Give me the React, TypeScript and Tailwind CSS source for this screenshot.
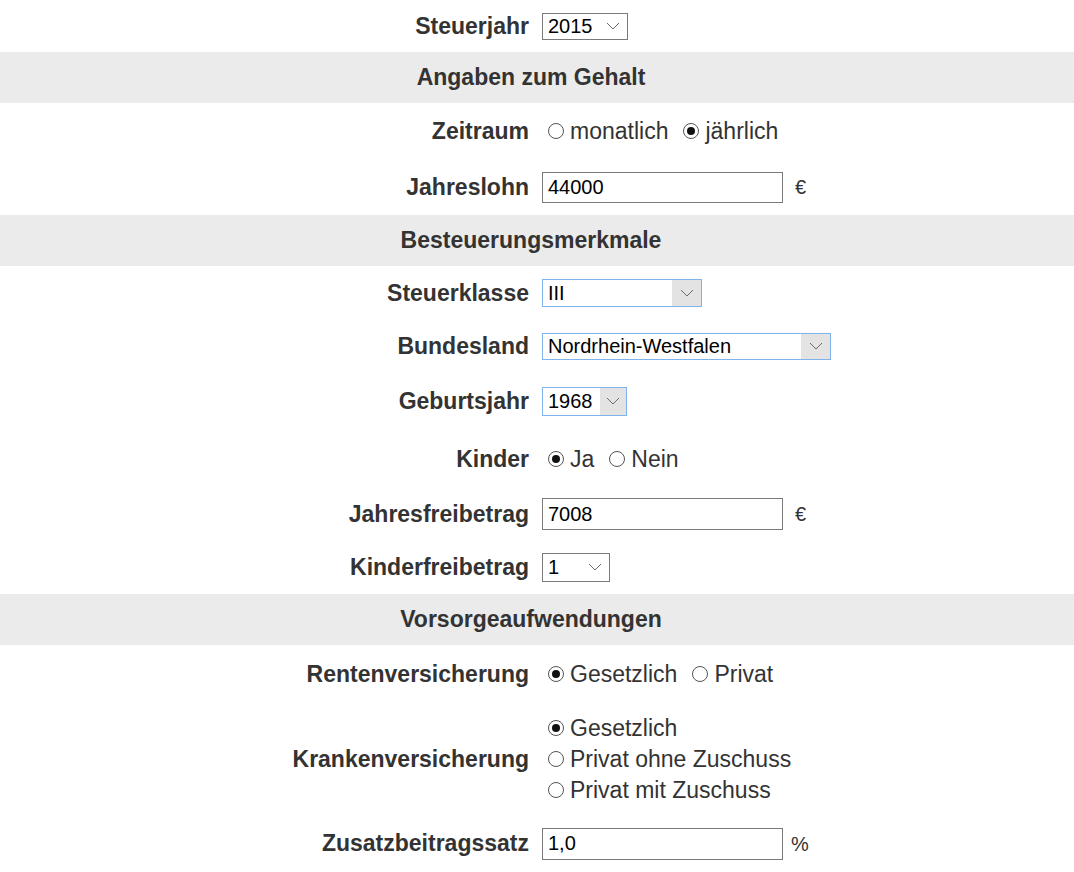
import React from 'react'

const font = { fontFamily: '"Liberation Sans", Arial, sans-serif' }

function Chevron() {
  return (
    <svg width="14" height="8" viewBox="0 0 14 8" className="shrink-0">
      <polyline points="1,1 7,7 13,1" fill="none" stroke="#6b6b6b" strokeWidth="1" />
    </svg>
  )
}

function Select({ value, box, arrow }: { value: string; box: string; arrow: string }) {
  return (
    <div className={`flex items-stretch bg-white text-[20px] text-black leading-none ${box}`}>
      <span className="flex-1 flex items-center pl-[5px]">{value}</span>
      <span className={`flex items-center justify-center ${arrow}`}>
        <Chevron />
      </span>
    </div>
  )
}

function TextInput({ value, box }: { value: string; box: string }) {
  return (
    <input
      type="text"
      defaultValue={value}
      className={`border border-[#7a7a7a] bg-white px-[5px] text-[20px] text-black outline-none ${box}`}
      style={font}
    />
  )
}

function Radio({ label, checked, first }: { label: string; checked?: boolean; first?: boolean }) {
  return (
    <span className={`inline-flex items-center ${first ? '' : 'ml-[9px]'}`}>
      <span className="mx-[6px] w-4 h-4 rounded-full border border-[#555] bg-white flex items-center justify-center">
        {checked && <span className="w-[8px] h-[8px] rounded-full bg-[#111]" />}
      </span>
      <span className="text-[23px] text-[#333]">{label}</span>
    </span>
  )
}

function Row({ label, h, children }: { label: string; h: string; children: React.ReactNode }) {
  return (
    <div className={`flex items-center ${h}`}>
      <div className="w-[529px] shrink-0 text-right text-[23px] font-bold text-[#333]">{label}</div>
      <div className="ml-[13px] flex items-center">{children}</div>
    </div>
  )
}

function Band({ title }: { title: string }) {
  return (
    <div className="h-[51px] bg-[#ebebeb] flex items-center justify-center pr-[12px] text-[23px] font-bold text-[#333]">
      {title}
    </div>
  )
}

export default function App() {
  return (
    <div className="w-[1074px] h-[872px] bg-white overflow-hidden" style={font}>
      {/* Steuerjahr */}
      <Row label="Steuerjahr" h="h-[52px]">
        <Select value="2015" box="w-[86px] h-[27px] border border-[#7a7a7a]" arrow="w-[28px]" />
      </Row>

      <Band title="Angaben zum Gehalt" />

      <Row label="Zeitraum" h="h-[56px]">
        <Radio label="monatlich" first />
        <Radio label="jährlich" checked />
      </Row>
      <Row label="Jahreslohn" h="h-[56px]">
        <TextInput value="44000" box="w-[241px] h-[31px]" />
        <span className="ml-[12px] text-[20px] text-[#333]">€</span>
      </Row>

      <Band title="Besteuerungsmerkmale" />

      <Row label="Steuerklasse" h="h-[54px]">
        <Select value="III" box="w-[160px] h-[28px] border border-[#7eb4ea]" arrow="w-[29px] bg-[#e3e3e3]" />
      </Row>
      <Row label="Bundesland" h="h-[52px]">
        <Select value="Nordrhein-Westfalen" box="w-[289px] h-[27px] border border-[#7eb4ea]" arrow="w-[29px] bg-[#e3e3e3]" />
      </Row>
      <Row label="Geburtsjahr" h="h-[58px]">
        <Select value="1968" box="w-[85px] h-[29px] border border-[#7eb4ea]" arrow="w-[26px] bg-[#e3e3e3]" />
      </Row>
      <Row label="Kinder" h="h-[58px]">
        <Radio label="Ja" checked first />
        <Radio label="Nein" />
      </Row>
      <Row label="Jahresfreibetrag" h="h-[52px]">
        <TextInput value="7008" box="w-[241px] h-[32px]" />
        <span className="ml-[12px] text-[20px] text-[#333]">€</span>
      </Row>
      <Row label="Kinderfreibetrag" h="h-[54px]">
        <Select value="1" box="w-[68px] h-[29px] border border-[#7a7a7a]" arrow="w-[28px]" />
      </Row>

      <Band title="Vorsorgeaufwendungen" />

      <Row label="Rentenversicherung" h="h-[58px]">
        <Radio label="Gesetzlich" checked first />
        <Radio label="Privat" />
      </Row>
      <Row label="Krankenversicherung" h="h-[112px]">
        <div className="flex flex-col">
          <div className="h-[31px] flex items-center">
            <Radio label="Gesetzlich" checked first />
          </div>
          <div className="h-[31px] flex items-center">
            <Radio label="Privat ohne Zuschuss" first />
          </div>
          <div className="h-[31px] flex items-center">
            <Radio label="Privat mit Zuschuss" first />
          </div>
        </div>
      </Row>
      <Row label="Zusatzbeitragssatz" h="h-[57px]">
        <TextInput value="1,0" box="w-[241px] h-[32px]" />
        <span className="ml-[8px] text-[20px] text-[#333]">%</span>
      </Row>
    </div>
  )
}
